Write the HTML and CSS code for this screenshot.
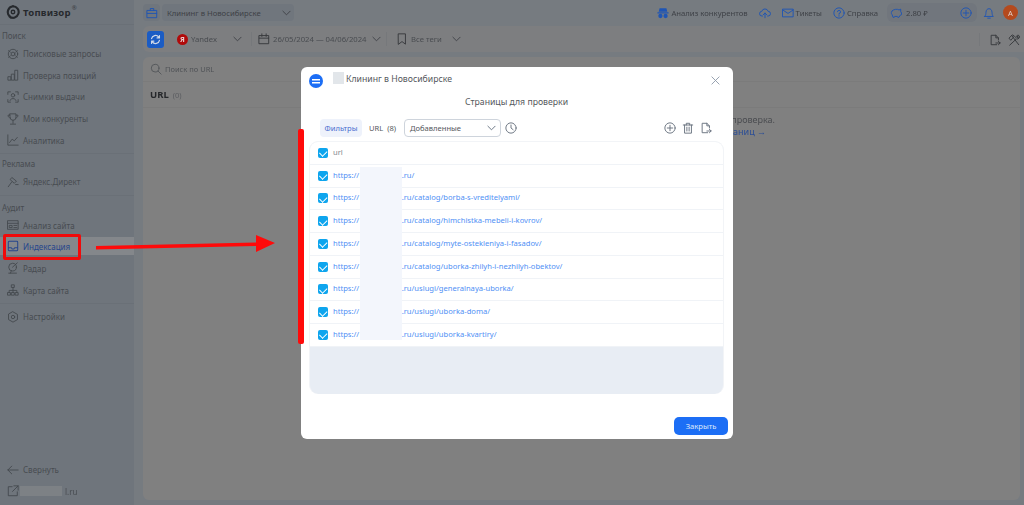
FILE: index.html
```html
<!DOCTYPE html>
<html lang="en">
<head>
  <meta charset="UTF-8">
  <title>Топвизор</title>
  <link rel="stylesheet" href="styles.css">
</head>
<body>
  <div class="page">
  <div class="app">
    <aside class="sidebar">
      <div class="logo">
        <svg class="logo-icon" viewBox="0 0 16 16"><path d="M8 1.500a6.500 6.500 0 1 1-3.800 11.800" stroke="#26292d" stroke-width="2.400"/><path d="M4 12.600A6.500 6.500 0 0 1 8 1.500" stroke="#26292d" stroke-width="2.400"/><circle cx="8" cy="8" r="2" stroke="#26292d" stroke-width="1.600"/><path d="M5 14.500h4" stroke="#26292d" stroke-width="1.600"/></svg>
        <span class="logo-text">Топвизор</span><sup class="logo-mark">®</sup>
      </div>

      <div class="nav-label first">Поиск</div>
      <a class="nav-item"><svg viewBox="0 0 14 14"><circle cx="7" cy="7" r="2.200"/><circle cx="7" cy="7" r="5.500"/><path d="M2 3l2 2M12 3l-2 2M2 11l2-2M12 11l-2-2"/></svg>Поисковые запросы</a>
      <a class="nav-item"><svg viewBox="0 0 14 14"><path d="M1.500 9h3v4h-3zM5.500 6h3v7h-3zM9.500 1.500h3V13h-3z"/></svg>Проверка позиций</a>
      <a class="nav-item"><svg viewBox="0 0 14 14"><path d="M1 4V1h3M10 1h3v3M1 10v3h3M13 10v3h-3"/><circle cx="7" cy="5" r="2"/><path d="M3.500 11c.5-3 6.500-3 7 0"/></svg>Снимки выдачи</a>
      <a class="nav-item"><svg viewBox="0 0 14 14"><path d="M3.500 1h7v4a3.500 3.500 0 0 1-7 0zM3.500 2.500H1.200c0 2 1 3 2.500 3.300M10.500 2.500h2.300c0 2-1 3-2.500 3.300M7 8.500V12M4 13h6"/></svg>Мои конкуренты</a>
      <a class="nav-item"><svg viewBox="0 0 14 14"><path d="M1 1v12h12M3 10l3-4 2.500 2L12 4"/></svg>Аналитика</a>
      <div class="nav-line"></div>

      <div class="nav-label">Реклама</div>
      <a class="nav-item"><svg viewBox="0 0 14 14"><path d="M6 2l5 4-2.500 2.500-4.500-4zM5.500 7L1.500 12.500M10 10h3"/></svg>Яндекс.Директ</a>
      <div class="nav-line"></div>

      <div class="nav-label audit">Аудит</div>
      <a class="nav-item"><svg viewBox="0 0 14 14"><path d="M1 2h12v10H1zM1 5h12M3 7.500h3v2.500H3zM8 7.500h3.500M8 10h3.500"/></svg>Анализ сайта</a>
      <a class="nav-item active"><svg viewBox="0 0 14 14"><path d="M2.500 1.500h9a1 1 0 0 1 1 1v9a1 1 0 0 1-1 1h-9a1 1 0 0 1-1-1v-9a1 1 0 0 1 1-1zM1.500 9h3.500l1 1.500h2L9 9h3.500"/></svg>Индексация</a>
      <a class="nav-item"><svg viewBox="0 0 14 14"><circle cx="6.500" cy="6" r="4.500"/><path d="M6.500 6L12 1M2 13h9M5 10.500L4 13"/></svg>Радар</a>
      <a class="nav-item"><svg viewBox="0 0 14 14"><path d="M5.500 1h3v3h-3zM1 10h3v3H1zM5.500 10h3v3h-3zM10 10h3v3h-3zM7 4v6M2.500 10V7.500h9V10"/></svg>Карта сайта</a>
      <div class="nav-line"></div>
      <a class="nav-item settings"><svg viewBox="0 0 14 14"><circle cx="7" cy="7" r="2"/><path d="M7 1l5.200 3v6L7 13l-5.200-3V4z"/></svg>Настройки</a>

      <div class="sidebar-foot">
        <a class="nav-item"><svg viewBox="0 0 14 14"><path d="M13 7H1M5.500 2.500L1 7l4.500 4.500"/></svg>Свернуть</a>
        <a class="nav-item site-link"><svg viewBox="0 0 14 14"><path d="M6 2H1.500v10.500H12V8M8 1h5v5M13 1L6.500 7.500"/></svg><span class="site-blur"></span>l.ru</a>
      </div>
    </aside>

    <main class="main">
      <header class="topbar">
        <div class="project">
          <span class="project-icon"><svg class="blue-icon" viewBox="0 0 14 14"><path d="M1.500 4h11v8.500h-11zM5 4V1.800h4V4M1.500 7.500h11"/></svg></span>
          <span class="project-select">Клининг в Новосибирске
            <svg class="chevron" viewBox="0 0 10 6"><path d="M1 1l4 4 4-4"/></svg>
          </span>
        </div>
        <div class="top-links">
          <a class="top-link"><svg class="blue-icon solid" viewBox="0 0 14 14"><path d="M3 1.500h8l1 4H2zM.5 6h13v1.500H.5z"/><circle cx="4" cy="10.500" r="2.500"/><circle cx="10" cy="10.500" r="2.500"/></svg>Анализ конкурентов</a>
          <a class="top-link"><svg class="blue-icon" viewBox="0 0 14 14"><path d="M4 10.500H3.500a2.700 2.700 0 0 1-.3-5.400 3.900 3.900 0 0 1 7.500 0 2.700 2.700 0 0 1 0 5.400H10M7 12.500V7M5 9l2-2 2 2"/></svg></a>
          <a class="top-link"><svg class="blue-icon" viewBox="0 0 14 14"><path d="M1 2.500h12v9H1zM1 3.500l6 4 6-4"/></svg>Тикеты</a>
          <a class="top-link"><svg class="blue-icon" viewBox="0 0 14 14"><circle cx="7" cy="7" r="6"/><path d="M5.200 5.500A1.800 1.800 0 1 1 7 7.500V8.500M7 10v.8"/></svg>Справка</a>
          <div class="wallet">
            <svg class="blue-icon" viewBox="0 0 14 14"><path d="M2.500 4.500C4 2.500 9 2 10.500 3.500l2-1v3l1 1.500v2l-1.500.5-1.500 2.500H9l-.5-1h-3l-.5 1H3.500L2.500 9C1 7.500 1.500 5.500 2.500 4.500z"/></svg>
            <span>2.80 ₽</span>
            <svg class="blue-icon wallet-plus" viewBox="0 0 14 14"><circle cx="7" cy="7" r="6"/><path d="M7 3.800v6.400M3.800 7h6.400"/></svg>
          </div>
          <svg class="blue-icon bell" viewBox="0 0 14 14"><path d="M2 11h10c-1.500-1.500-1.300-3-1.500-5C10.300 3.500 9 2 7 2S3.700 3.500 3.500 6c-.2 2 0 3.500-1.500 5zM5.500 13h3"/></svg>
          <span class="avatar">А</span>
        </div>
      </header>

      <div class="toolbar">
        <button class="refresh-btn"><svg viewBox="0 0 14 14"><path d="M2 6a5 5 0 0 1 9-2M12 2v3H9M12 8a5 5 0 0 1-9 2M2 12V9h3"/></svg></button>
        <div class="tool-item engine">
          <span class="ya-icon">Я</span>Yandex
          <svg class="chevron" viewBox="0 0 10 6"><path d="M1 1l4 4 4-4"/></svg>
        </div>
        <div class="tool-item dates">
          <svg class="dark-icon" viewBox="0 0 14 14"><path d="M1.500 3h11v9.500h-11zM1.500 6h11M4.500 1v3M9.500 1v3"/></svg>26/05/2024 — 04/06/2024
          <svg class="chevron" viewBox="0 0 10 6"><path d="M1 1l4 4 4-4"/></svg>
        </div>
        <div class="tool-item tags">
          <svg class="dark-icon" viewBox="0 0 14 14"><path d="M3 1h8v12L7 10l-4 3z"/></svg>Все теги
          <svg class="chevron" viewBox="0 0 10 6"><path d="M1 1l4 4 4-4"/></svg>
        </div>
        <div class="tool-right">
          <svg class="dark-icon" viewBox="0 0 14 14"><path d="M9 12.500H2.500v-11H8l3 3V7M8 1.500v3h3M8 10.500h5M11 8.500l2 2-2 2"/></svg>
          <svg class="dark-icon" viewBox="0 0 14 14"><path d="M4.500 2L12.500 12.500M1.500 4.500L5 1l2.500 1.500L3.500 7zM9.500 6L2 13M9 4.500c0-2 2-3.500 3.500-3l-2 2 1 1 2-2c.5 1.500-1 3.500-3 3.500"/></svg>
        </div>
      </div>

      <section class="card">
        <div class="card-search">
          <svg class="search-icon" viewBox="0 0 14 14"><circle cx="6" cy="6" r="4.500"/><path d="M9.500 9.500L13 13"/></svg>Поиск по URL
        </div>
        <div class="card-head"><b>URL</b><span class="count">(0)</span></div>
        <div class="empty-note">
          <div>Для просмотра данных нужна проверка.</div>
          <a class="empty-link">Перейти к списку страниц →</a>
        </div>
      </section>
    </main>
  </div>

  <div class="modal">
    <div class="modal-head">
      <span class="modal-badge"></span>
      <span class="title-blur"></span>
      <span class="modal-project">Клининг в Новосибирске</span>
      <svg class="modal-close" viewBox="0 0 10 10"><path d="M1 1l8 8M9 1l-8 8"/></svg>
    </div>
    <div class="modal-title">Страницы для проверки</div>
    <div class="modal-tools">
      <span class="filter-pill">Фильтры</span>
      <span class="url-count">URL&nbsp; (8)</span>
      <span class="select">Добавленные
        <svg class="chevron" viewBox="0 0 10 6"><path d="M1 1l4 4 4-4"/></svg>
      </span>
      <svg class="gray-icon" viewBox="0 0 14 14"><circle cx="7" cy="7" r="6"/><path d="M7 3.500V7l2.500 2"/></svg>
      <div class="modal-actions">
        <svg class="gray-icon" viewBox="0 0 14 14"><circle cx="7" cy="7" r="6"/><path d="M7 3.800v6.400M3.800 7h6.400"/></svg>
        <svg class="gray-icon" viewBox="0 0 14 14"><path d="M1.500 3.500h11M5 3.500V1.500h4v2M3 3.500V13h8V3.500M5.700 6v4.500M8.300 6v4.500"/></svg>
        <svg class="gray-icon" viewBox="0 0 14 14"><path d="M9 12.500H2.500v-11H8l3 3V7M8 1.500v3h3M8 10.500h5M11 8.500l2 2-2 2"/></svg>
      </div>
    </div>

    <div class="url-table">
      <div class="url-row head"><span class="check"></span><span>url</span></div>
      <div class="url-row"><span class="check"></span><a>https://<span class="url-gap"></span>.ru/</a></div>
      <div class="url-row"><span class="check"></span><a>https://<span class="url-gap"></span>.ru/catalog/borba-s-vreditelyami/</a></div>
      <div class="url-row"><span class="check"></span><a>https://<span class="url-gap"></span>.ru/catalog/himchistka-mebeli-i-kovrov/</a></div>
      <div class="url-row"><span class="check"></span><a>https://<span class="url-gap"></span>.ru/catalog/myte-ostekleniya-i-fasadov/</a></div>
      <div class="url-row"><span class="check"></span><a>https://<span class="url-gap"></span>.ru/catalog/uborka-zhilyh-i-nezhilyh-obektov/</a></div>
      <div class="url-row"><span class="check"></span><a>https://<span class="url-gap"></span>.ru/uslugi/generalnaya-uborka/</a></div>
      <div class="url-row"><span class="check"></span><a>https://<span class="url-gap"></span>.ru/uslugi/uborka-doma/</a></div>
      <div class="url-row"><span class="check"></span><a>https://<span class="url-gap"></span>.ru/uslugi/uborka-kvartiry/</a></div>
      <span class="rows-blur"></span>
    </div>

    <div class="modal-foot">
      <button class="close-btn">Закрыть</button>
    </div>
  </div>

  <!-- red annotations drawn on top of the screenshot -->
  <div class="mark-box"></div>
  <div class="mark-bar"></div>
  <svg class="mark-arrow" viewBox="0 0 182 24"><path d="M0 14L160 10.500V3l19 8-19 9v-6L0 17.500z" fill="#ff0a0a"/></svg>
  </div>
</body>
</html>
```

FILE: styles.css
```css
* {
  margin: 0;
  padding: 0;
  box-sizing: border-box;
}

body {
  font-family: 'Noto Sans', 'Open Sans', sans-serif;
  width: 1024px;
  height: 505px;
  background: #767b80;
  color: #46494d;
  font-size: 8px;
  overflow: hidden;
}

.page {
  position: relative;
  width: 100%;
  height: 100%;
  filter: blur(0.35px);
}

svg {
  fill: none;
  stroke-linecap: round;
  stroke-linejoin: round;
  flex-shrink: 0;
}

.app {
  display: flex;
  height: 100%;
}

/* Sidebar */
.sidebar {
  width: 134px;
  height: 100%;
  background: #6f757c;
  display: flex;
  flex-direction: column;
  color: #484c51;
}

.logo {
  height: 25px;
  padding-left: 6px;
  display: flex;
  align-items: center;
  gap: 3px;
  border-bottom: 1px solid #6a7077;
}

.logo-icon {
  width: 14px;
  height: 14px;
}

.logo-text {
  font-size: 9.500px;
  font-weight: 700;
  color: #26292d;
  letter-spacing: 0.2px;
}

.logo-mark {
  font-size: 6px;
  margin: -8px 0 0 -2px;
  color: #3c3f44;
}

.nav-label {
  height: 14px;
  line-height: 14px;
  padding-left: 2px;
  margin-top: 1px;
}

.nav-label.first {
  margin-top: 4px;
}

.nav-label.audit {
  margin-top: 3px;
}

.nav-item {
  height: 21.600px;
  padding-left: 7px;
  display: flex;
  align-items: center;
  gap: 4px;
  color: #484c51;
}

.nav-item svg {
  width: 12px;
  height: 12px;
  stroke: #43474c;
  stroke-width: 1;
}

.nav-item.active {
  background: #84878b;
  color: #26468c;
  height: 18px;
  margin: 1px 0 2.500px;
}

.nav-item.active svg {
  stroke: #26468c;
  stroke-width: 1.200;
}

.nav-line {
  height: 1px;
  background: #6a7077;
  margin-top: 2px;
  margin-bottom: 2px;
}

.nav-item.settings {
  height: 22px;
}

.sidebar-foot {
  margin-top: auto;
  margin-bottom: 3px;
}

.site-blur {
  width: 42px;
  height: 10px;
  background: #7d8185;
  margin-left: -2px;
}

.site-link {
  gap: 3px;
}

/* Top area */
.main {
  flex: 1;
  display: flex;
  flex-direction: column;
  padding-left: 9px;
}

.topbar {
  height: 25px;
  display: flex;
  align-items: center;
  justify-content: space-between;
  background: #767b80;
  margin-left: -9px;
  padding-left: 9px;
  font-size: 7.700px;
}

.project {
  display: flex;
  align-items: center;
  gap: 2px;
}

.project-icon {
  width: 17px;
  height: 17px;
  border-radius: 4px;
  background: #70767d;
  display: flex;
  align-items: center;
  justify-content: center;
}

.project-select {
  width: 132px;
  height: 17px;
  padding: 0 3px 0 5px;
  border-radius: 4px;
  background: #70767d;
  display: flex;
  align-items: center;
  justify-content: space-between;
  color: #3e4146;
}

.chevron {
  width: 9px;
  height: 6px;
  stroke: #3e4146;
  stroke-width: 1;
}

.blue-icon {
  width: 12px;
  height: 12px;
  stroke: #1f55b4;
  stroke-width: 1.100;
}

.blue-icon.solid {
  fill: #1f55b4;
  stroke: none;
}

.dark-icon {
  width: 12px;
  height: 12px;
  stroke: #37393d;
  stroke-width: 1.100;
}

.top-links {
  display: flex;
  align-items: center;
}

.top-link {
  display: flex;
  align-items: center;
  gap: 2px;
  margin-right: 11px;
  color: #3e4146;
}

.wallet {
  width: 90px;
  height: 19px;
  margin-left: -2px;
  border-radius: 6px;
  background: #71767d;
  display: flex;
  align-items: center;
  gap: 4px;
  padding-left: 3px;
  color: #3e4146;
}

.wallet-plus {
  margin-left: auto;
  margin-right: 5px;
}

.bell {
  margin-left: 6px;
}

.avatar {
  width: 15px;
  height: 15px;
  margin: 0 6px 0 8px;
  border-radius: 50%;
  background: #b44a1e;
  color: #e0cfc6;
  font-size: 7.500px;
  display: flex;
  align-items: center;
  justify-content: center;
}

.toolbar {
  height: 26px;
  margin-top: 1px;
  border-radius: 6px 0 0 6px;
  background: #7d7e80;
  display: flex;
  align-items: center;
  padding-left: 4px;
  color: #494c50;
  font-size: 7.700px;
}

.refresh-btn {
  width: 17px;
  height: 17px;
  border: none;
  border-radius: 3px;
  background: #1b5cc4;
  display: flex;
  align-items: center;
  justify-content: center;
}

.refresh-btn svg {
  width: 11px;
  height: 11px;
  stroke: #cfd8e8;
  stroke-width: 1.500;
}

.tool-item {
  height: 14px;
  display: flex;
  align-items: center;
  gap: 3px;
  border-right: 1px solid #76787b;
}

.engine {
  width: 75px;
  margin-left: 13px;
}

.engine .chevron {
  margin-left: auto;
  margin-right: 9px;
}

.ya-icon {
  width: 11px;
  height: 11px;
  border-radius: 50%;
  background: #b00a0a;
  color: #e8d0d0;
  font-size: 7px;
  font-weight: 700;
  display: flex;
  align-items: center;
  justify-content: center;
}

.dates {
  width: 129px;
  margin-left: 6px;
}

.dates .chevron {
  margin-left: 3px;
}

.tags {
  margin-left: 9px;
  border-right: none;
}

.tags .chevron {
  margin-left: 7px;
}

.tool-right {
  margin-left: auto;
  display: flex;
  gap: 7px;
  padding: 1px 4px 0 9px;
  border-left: 1px solid #76787b;
}

/* Card behind the dialog */
.card {
  flex: 1;
  margin: 5px 4px 5px 0;
  background: #808080;
  border-radius: 6px;
  display: flex;
  flex-direction: column;
  color: #4a4c50;
}

.card-search {
  height: 25px;
  padding-left: 7px;
  display: flex;
  align-items: center;
  gap: 3px;
  border-bottom: 1px solid #7b7b7b;
  color: #505357;
  font-size: 7.500px;
}

.search-icon {
  width: 12px;
  height: 12px;
  stroke: #505357;
  stroke-width: 1;
}

.card-head {
  height: 26px;
  padding-left: 7px;
  display: flex;
  align-items: center;
  gap: 4px;
  border-bottom: 1px solid #7b7b7b;
}

.card-head b {
  font-size: 9.500px;
  color: #26282b;
}

.count {
  font-size: 7.500px;
  color: #5a5c60;
}

.empty-note {
  align-self: flex-end;
  margin: 6px 245px 0 0;
  line-height: 12px;
  font-size: 9px;
  text-align: right;
  color: #4a4c50;
}

.empty-link {
  display: block;
  padding-right: 9px;
  color: #2a4d96;
}

/* Dialog */
.modal {
  position: absolute;
  left: 301px;
  top: 67px;
  width: 432px;
  height: 372px;
  padding: 4px 9px 4px 8px;
  background: #fff;
  border-radius: 6px;
  display: flex;
  flex-direction: column;
  color: #55585c;
}

.modal-head {
  height: 20px;
  display: flex;
  align-items: center;
}

.modal-badge {
  width: 14px;
  height: 14px;
  border-radius: 50%;
  background: linear-gradient(#fff, #fff) center 5px / 8px 1.500px no-repeat,
              linear-gradient(#fff, #fff) center 8px / 8px 1.500px no-repeat,
              #1c6ef5;
}

.title-blur {
  width: 11px;
  height: 12px;
  margin: -6px 2px 0 10px;
  background: #e2e6ea;
}

.modal-project {
  font-size: 8.700px;
  color: #55585c;
  margin-top: -4px;
}

.modal-close {
  width: 9px;
  height: 9px;
  margin: -2px 4px 0 auto;
  stroke: #8d98a8;
  stroke-width: 1;
}

.modal-title {
  height: 16px;
  margin-top: 3px;
  line-height: 16px;
  text-align: center;
  font-size: 8.700px;
  color: #55585c;
}

.modal-tools {
  height: 18px;
  margin-top: 9px;
  padding: 0 12px 0 11px;
  display: flex;
  align-items: center;
  font-size: 7.600px;
}

.filter-pill {
  width: 42px;
  height: 18px;
  border-radius: 4px;
  background: #eef2fb;
  color: #4a6fd0;
  display: flex;
  align-items: center;
  justify-content: center;
}

.url-count {
  width: 35px;
  margin-left: 7px;
  color: #55585c;
}

.select {
  width: 97px;
  height: 18px;
  padding: 0 4px 0 5px;
  border: 1px solid #ced4dc;
  border-radius: 4px;
  display: flex;
  align-items: center;
  justify-content: space-between;
  color: #55585c;
}

.select .chevron {
  stroke: #5f6b7b;
}

.gray-icon {
  width: 12px;
  height: 12px;
  stroke: #68727e;
  stroke-width: 1.100;
}

.select + .gray-icon {
  margin-left: 4px;
}

.modal-actions {
  margin-left: auto;
  display: flex;
  gap: 6px;
}

.url-table {
  position: relative;
  height: 253px;
  margin-top: 4px;
  border: 1px solid #f2f4f7;
  border-bottom: none;
  border-radius: 9px;
  background: #e8edf4;
  overflow: hidden;
  font-size: 7.600px;
}

.url-row {
  height: 22.750px;
  padding-left: 8px;
  display: flex;
  align-items: center;
  gap: 5px;
  background: #fff;
  border-bottom: 1px solid #f0f3f7;
}

.url-row.head {
  color: #85898e;
}

.url-row a {
  color: #4f90f5;
}

.url-row a, .url-row.head span:last-child {
  margin-top: -2px;
}

.url-gap {
  display: inline-block;
  width: 42.500px;
}

.check {
  width: 10px;
  height: 10px;
  border-radius: 2px;
  background: #0ea5ee;
  position: relative;
}

.check::after {
  content: '';
  position: absolute;
  left: 3px;
  top: 1.500px;
  width: 3.500px;
  height: 5.500px;
  border: solid #fff;
  border-width: 0 1.300px 1.300px 0;
  transform: rotate(45deg);
}

.rows-blur {
  position: absolute;
  left: 50px;
  top: 25px;
  width: 42px;
  height: 173px;
  background: #f3f6fc;
}

.modal-foot {
  margin-top: auto;
  display: flex;
  justify-content: flex-end;
}

.close-btn {
  width: 54px;
  height: 18px;
  margin-right: -4px;
  border: none;
  border-radius: 5px;
  background: #1c6ef5;
  color: #dfe9fb;
  font-family: inherit;
  font-size: 7.600px;
}

/* Red marks */
.mark-box {
  position: absolute;
  left: 3px;
  top: 234px;
  width: 78px;
  height: 26px;
  border: 3px solid #f00a0a;
  border-radius: 2px;
}

.mark-bar {
  position: absolute;
  left: 298px;
  top: 129px;
  width: 6px;
  height: 215px;
  border-radius: 2px;
  background: #ff0a0a;
}

.mark-arrow {
  position: absolute;
  left: 96px;
  top: 232px;
  width: 182px;
  height: 24px;
}
```
